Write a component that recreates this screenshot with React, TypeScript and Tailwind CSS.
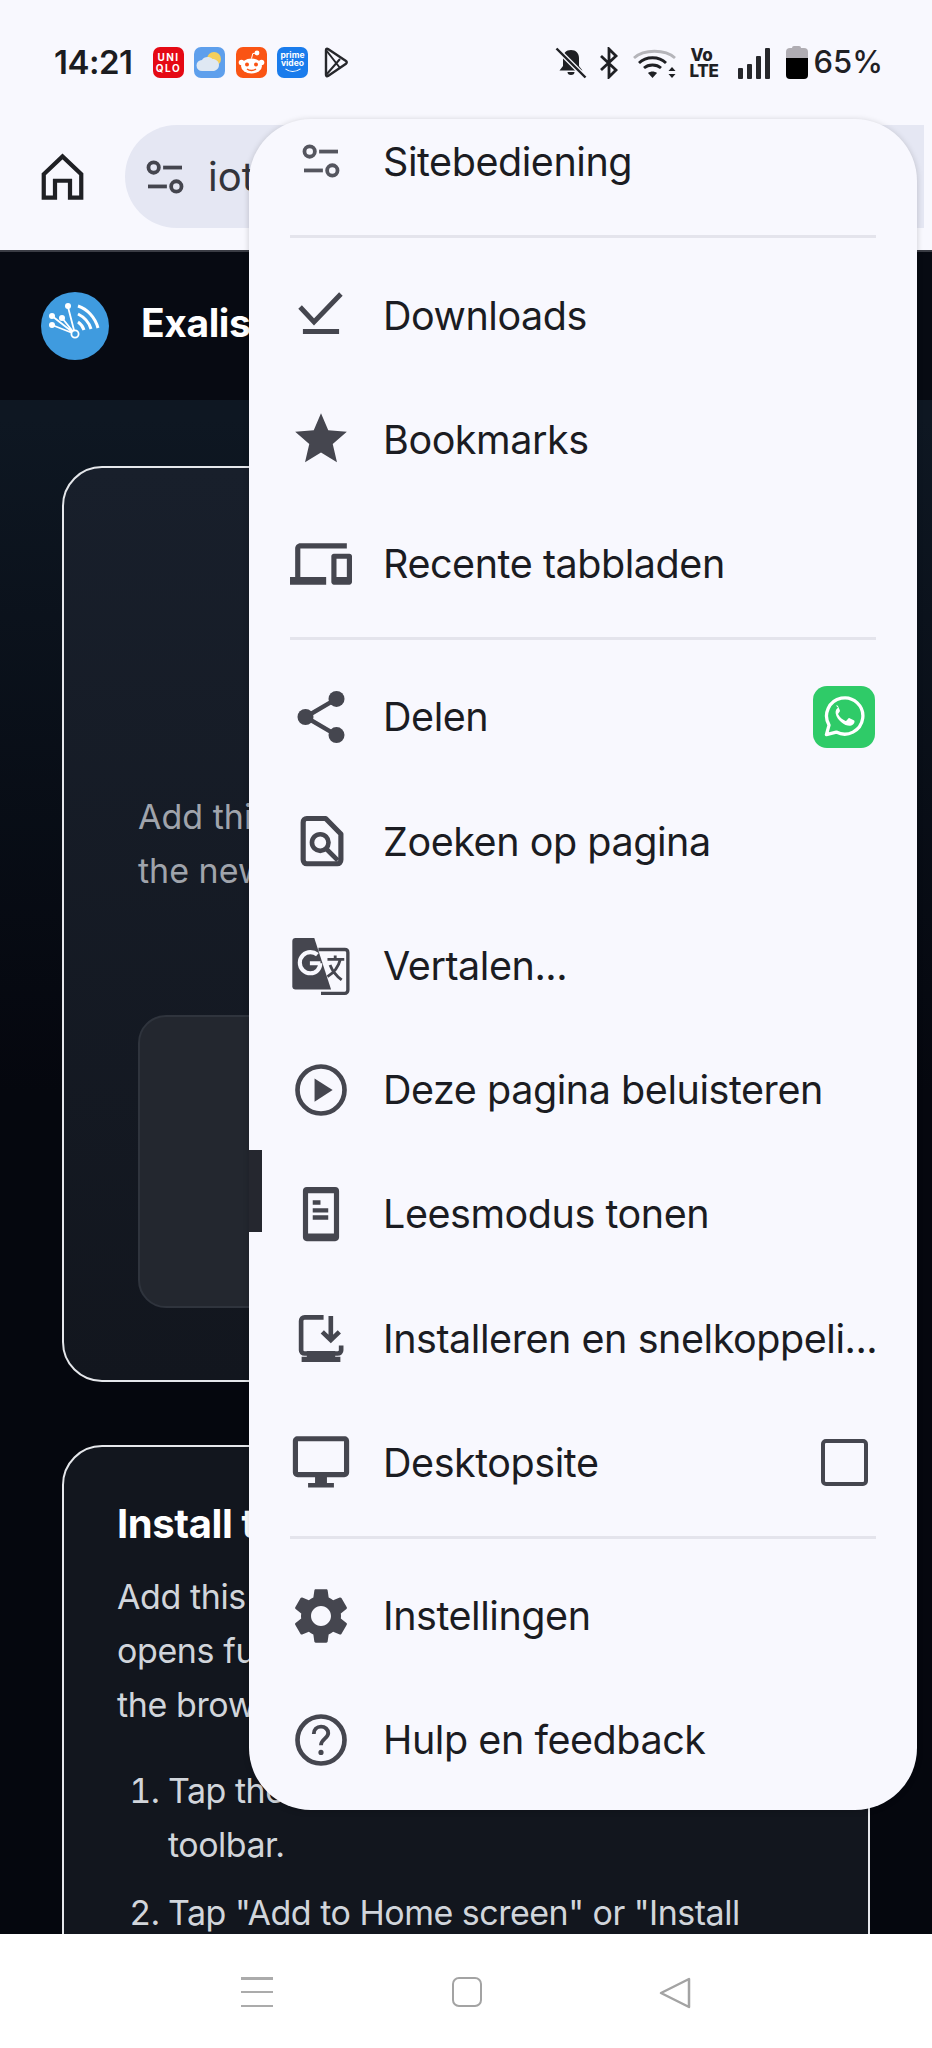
import type { ReactNode } from "react";

const font = "[font-family:Inter,'Noto_Sans',sans-serif]";

function Icon({ children }: { children: ReactNode }) {
  return (
    <svg viewBox="0 0 24 24" className="w-[62px] h-[62px] text-[#45464f]" fill="currentColor">
      {children}
    </svg>
  );
}

function TuneIcon({ className }: { className: string }) {
  return (
    <svg viewBox="0 0 40 36" className={className} fill="none" stroke="currentColor" strokeWidth="4">
      <circle cx="8" cy="8" r="5.5" />
      <path d="M18 8h20" />
      <circle cx="32" cy="28" r="5.5" />
      <path d="M2 28h20" />
    </svg>
  );
}

function MenuRow({ icon, label, right }: { icon: ReactNode; label: string; right?: ReactNode }) {
  return (
    <div className="h-[124.25px] flex items-center pl-[41px] pr-[42px]">
      <div className="w-[62px] h-[62px] mr-[31px] shrink-0">{icon}</div>
      <span className="flex-1 whitespace-nowrap pt-[2px] text-[39.5px] text-[#1b1c22] tracking-[-0.45px]">{label}</span>
      {right}
    </div>
  );
}

function Divider() {
  return <div className="h-[3px] bg-[#e4e4ec] mx-[41px] mt-[11px] mb-[15px]" />;
}

function SiteMenu() {
  return (
    <div className="absolute left-[249px] top-[119px] w-[668px] h-[1691px] bg-[#f8f8fe] rounded-[62px] shadow-[0_1px_6px_rgba(0,0,0,0.18)]">
      <div className="h-[105px] flex items-start pl-[41px] pr-[43px]">
        <div className="w-[62px] h-[62px] mr-[31px] flex items-center justify-center mt-[11px]">
          <TuneIcon className="w-[38px] h-[34px] text-[#55565f]" />
        </div>
        <span className="text-[39.5px] text-[#1b1c22] tracking-[-0.45px] mt-[14px]">Sitebediening</span>
      </div>
      <Divider />
      <MenuRow
        label="Downloads"
        icon={
          <Icon>
            <path d="M3.900 8.900l5.400 5.800L19.700 3.900" fill="none" stroke="currentColor" strokeWidth="1.900" />
            <path d="M5 17.400h14v2H5z" />
          </Icon>
        }
      />
      <MenuRow
        label="Bookmarks"
        icon={
          <Icon>
            <path d="M12 17.270L18.180 21l-1.640-7.030L22 9.240l-7.190-.61L12 2 9.190 8.630 2 9.240l5.460 4.730L5.820 21z" />
          </Icon>
        }
      />
      <MenuRow
        label="Recente tabbladen"
        icon={
          <Icon>
            <path d="M4 6h18V4H4c-1.100 0-2 .9-2 2v11H0v3h14v-3H4V6zm19 2h-6c-.55 0-1 .45-1 1v10c0 .55.45 1 1 1h6c.55 0 1-.45 1-1V9c0-.55-.45-1-1-1zm-1 9h-4v-7h4v7z" />
          </Icon>
        }
      />
      <Divider />
      <MenuRow
        label="Delen"
        icon={
          <Icon>
            <path d="M18 5L6 12l12 7" fill="none" stroke="currentColor" strokeWidth="1.700" />
            <circle cx="18" cy="5" r="3.100" />
            <circle cx="6" cy="12" r="3.100" />
            <circle cx="18" cy="19" r="3.100" />
          </Icon>
        }
        right={
          <div className="w-[62px] h-[62px] rounded-[14px] bg-[#2fcb68] flex items-center justify-center">
            <svg viewBox="0 0 40 40" className="w-[44px] h-[44px]" fill="none">
              <path
                d="M4 36l2.400-8.600A16.500 16.500 0 1 1 13 33.700L4 36z"
                stroke="#fff"
                strokeWidth="3"
                strokeLinejoin="round"
              />
              <path
                d="M14.600 11.500c-1 .4-2.600 2.300-2.200 5 .5 3.400 3 6.300 5.200 8.300 2.600 2.300 6 3.500 8.200 3.200 2-.3 3.800-2 3.800-3.800 0-.6-.2-.9-.7-1.200l-3.800-1.900c-.6-.3-1-.1-1.400.4l-1.300 1.700c-.4.4-.8.5-1.400.2-2.700-1.100-4.800-3.100-6.200-5.600-.3-.5-.2-.9.200-1.300l1-1.200c.4-.5.4-.9.2-1.400l-1.600-3.700c-.3-.6-.6-.7-1.100-.7h-.9z"
                fill="#fff"
              />
            </svg>
          </div>
        }
      />
      <MenuRow
        label="Zoeken op pagina"
        icon={
          <Icon>
            <path
              d="M6.500 3.300h7.300l5.900 6v10c0 .9-.6 1.500-1.400 1.500H6.500c-.8 0-1.400-.6-1.400-1.500V4.800c0-.9.6-1.500 1.400-1.500z"
              fill="none"
              stroke="currentColor"
              strokeWidth="2"
              strokeLinejoin="round"
            />
            <circle cx="11.700" cy="12.600" r="3.200" fill="none" stroke="currentColor" strokeWidth="1.800" />
            <path d="M14 15l4.500 4.500" fill="none" stroke="currentColor" strokeWidth="1.800" />
          </Icon>
        }
      />
      <MenuRow
        label="Vertalen..."
        icon={
          <Icon>
            <path d="M11 6h10.200c.7 0 1.200.5 1.200 1.200v14.500c0 .7-.5 1.300-1.200 1.300H12" fill="none" stroke="currentColor" strokeWidth="1.300" />
            <path d="M2.100 1.500h7.300l6.500 20H2.100c-.7 0-1.200-.5-1.200-1.200V2.700C.9 2 1.400 1.500 2.100 1.500z" />
            <path d="M11.800 11.300H7.700M11.700 11.300c0 2.300-1.600 3.900-3.800 3.900a4.100 4.100 0 0 1 0-8.200c1.100 0 2 .4 2.700 1" fill="none" stroke="#f8f8fe" strokeWidth="1.600" />
            <path d="M14.500 9.800h6.500M17.500 8.300v1.500M19.500 9.800c-.8 3-3 5.500-5 6.700M15.500 12c.8 2 2.500 4.300 4.500 5.800" fill="none" stroke="currentColor" strokeWidth="1.100" />
          </Icon>
        }
      />
      <MenuRow
        label="Deze pagina beluisteren"
        icon={
          <Icon>
            <circle cx="12" cy="12" r="9.100" fill="none" stroke="currentColor" strokeWidth="1.800" />
            <path d="M9.500 7.500v9l7-4.500z" />
          </Icon>
        }
      />
      <MenuRow
        label="Leesmodus tonen"
        icon={
          <Icon>
            <path
              fillRule="evenodd"
              d="M6.500 1.500h11c.9 0 1.500.6 1.500 1.500v18c0 .9-.6 1.500-1.500 1.500h-11C5.600 22.500 5 21.900 5 21V3c0-.9.6-1.500 1.500-1.500zM7 4v15.500h10V4H7z"
            />
            <path d="M8.800 6.700h3v1.700h-3zM8.800 9.800h6v1.600h-6zM8.800 12.500h6v1.700h-6z" />
          </Icon>
        }
      />
      <MenuRow
        label="Installeren en snelkoppeli..."
        icon={
          <Icon>
            <path d="M13 4H5.700C4.800 4 4.300 4.600 4.300 5.400v11.300c0 .7.5 1.300 1.400 1.300h12.700c.9 0 1.400-.6 1.400-1.300v-1.800" fill="none" stroke="currentColor" strokeWidth="1.800" />
            <path d="M6.500 18h11v2.300h2v2H4.500v-2h2z" transform="translate(0 -1)" />
            <path d="M15.800 3.500v9M12.500 9.600l3.300 3.200 3.300-3.200" fill="none" stroke="currentColor" strokeWidth="1.800" />
          </Icon>
        }
      />
      <MenuRow
        label="Desktopsite"
        icon={
          <Icon>
            <path
              fillRule="evenodd"
              d="M3 2h18c1.100 0 1.900.8 1.900 1.900V16c0 1.100-.8 1.900-1.900 1.900h-6.700v2.200h2.700v1.800H7v-1.800h2.700v-2.200H3c-1.100 0-1.900-.8-1.900-1.900V3.900C1.100 2.800 1.900 2 3 2zm.1 2v11.900h17.800V4H3.100z"
            />
          </Icon>
        }
        right={<div className="w-[47px] h-[47px] mr-[7px] border-[4px] border-[#45464f] rounded-[5px]" />}
      />
      <Divider />
      <MenuRow
        label="Instellingen"
        icon={
          <Icon>
            <path d="M19.140 12.940c.04-.3.06-.61.06-.94 0-.32-.02-.64-.07-.94l2.030-1.580c.18-.14.23-.41.12-.61l-1.920-3.320c-.12-.22-.37-.29-.59-.22l-2.390.96c-.5-.38-1.030-.7-1.620-.94l-.36-2.540c-.04-.24-.24-.41-.48-.41h-3.840c-.24 0-.43.17-.47.41l-.36 2.540c-.59.24-1.130.57-1.620.94l-2.390-.96c-.22-.08-.47 0-.59.22L2.740 8.870c-.12.21-.08.47.12.61l2.030 1.580c-.05.3-.09.63-.09.94s.02.64.07.94l-2.030 1.580c-.18.14-.23.41-.12.61l1.920 3.320c.12.22.37.29.59.22l2.390-.96c.5.38 1.030.7 1.620.94l.36 2.540c.05.24.24.41.48.41h3.840c.24 0 .44-.17.47-.41l.36-2.540c.59-.24 1.130-.56 1.620-.94l2.390.96c.22.08.47 0 .59-.22l1.920-3.320c.12-.22.07-.47-.12-.61l-2.010-1.580zM12 15.600c-1.980 0-3.600-1.620-3.600-3.600s1.620-3.600 3.600-3.600 3.600 1.620 3.600 3.600-1.620 3.600-3.600 3.600z" transform="translate(-0.900 -0.900) scale(1.075)" />
          </Icon>
        }
      />
      <MenuRow
        label="Hulp en feedback"
        icon={
          <Icon>
            <circle cx="12" cy="12" r="9.100" fill="none" stroke="currentColor" strokeWidth="1.800" />
            <path d="M9.200 9.700c0-1.700 1.200-2.900 2.800-2.900s2.800 1.100 2.800 2.500c0 2.100-2.800 2.300-2.800 4.700" fill="none" stroke="currentColor" strokeWidth="1.500" />
            <circle cx="12" cy="16.800" r="1" />
          </Icon>
        }
      />
      {/* stray dark block that sits over the menu's left edge */}
      <div className="absolute left-0 top-[1031px] w-[13px] h-[82px] bg-[#25272f]" />
    </div>
  );
}

function StatusBar() {
  return (
    <div className="h-[124px] flex items-center pl-[54px] pr-[49px] pt-[1px]">
      <span className="text-[33px] font-semibold text-[#1b1c20] w-[78px] tracking-[-0.5px] mr-[21px]">14:21</span>
      <div className="w-[31px] h-[31px] rounded-[7px] bg-[#e50914] flex flex-col items-center justify-center text-white text-[10px] leading-[11px] font-bold tracking-[1.500px]">
        <span>UNI</span>
        <span>QLO</span>
      </div>
      <svg viewBox="0 0 31 31" className="w-[31px] h-[31px] ml-[10px]">
        <rect width="31" height="31" rx="7" fill="#5e9fec" />
        <circle cx="20" cy="12" r="7" fill="#f5cf5c" />
        <path d="M8 24a5.500 5.500 0 0 1 0-11c1.500-3 7-4.500 10.500-1 3.500 0 6.500 2.500 6.500 6s-3 6-6 6z" fill="#dfe8f3" />
      </svg>
      <svg viewBox="0 0 31 31" className="w-[31px] h-[31px] ml-[11px]">
        <rect width="31" height="31" rx="7" fill="#fa5414" />
        <ellipse cx="15.500" cy="19" rx="10.500" ry="7.500" fill="#fff" />
        <circle cx="5.500" cy="15.500" r="2.800" fill="#fff" />
        <circle cx="25.500" cy="15.500" r="2.800" fill="#fff" />
        <circle cx="21" cy="6" r="2.400" fill="#fff" />
        <path d="M15.500 11.500l1.300-5L21 6" stroke="#fff" strokeWidth="1" fill="none" />
        <circle cx="11" cy="17.500" r="2" fill="#fa5414" />
        <circle cx="20" cy="17.500" r="2" fill="#fa5414" />
        <path d="M11 22c2.500 2 6.500 2 9 0" stroke="#fa5414" strokeWidth="1.300" fill="none" />
      </svg>
      <div className="relative w-[31px] h-[31px] ml-[10px] rounded-[7px] bg-[#1a7cec] flex flex-col items-center pt-[4px] text-white text-[8.500px] leading-[8px] font-bold">
        <span>prime</span>
        <span>video</span>
        <svg viewBox="0 0 20 6" className="w-[18px] h-[5px] mt-[1px]" fill="none" stroke="#fff" strokeWidth="1.300">
          <path d="M1 1c5 4 12 4 18 0" />
        </svg>
      </div>
      <svg viewBox="0 0 26 31" className="w-[26px] h-[31px] ml-[15px]" fill="none" stroke="#26272b" strokeWidth="2.400" strokeLinejoin="round">
        <path d="M3 3c0-1 1-1.500 2-1l18 12c1 .7 1 2 0 2.700L5 29c-1 .5-2 0-2-1z" />
        <path d="M3 28l14-16M3 3l14 18" strokeWidth="2" />
      </svg>

      <div className="flex-1" />

      <svg viewBox="0 0 32 32" className="w-[32px] h-[32px]" fill="#1f2024">
        <path d="M16 3c-5 0-8 3.500-8 8v8l-3.500 4.500h23L24 19v-8c0-4.500-3-8-8-8zM12.500 25h7a3.500 3 0 0 1-7 0z" />
        <path d="M1.500 1.500l29 29" stroke="#f8f8fe" strokeWidth="5" />
        <path d="M1.500 1.500l29 29" stroke="#1f2024" strokeWidth="2.400" />
      </svg>
      <svg viewBox="0 0 20 32" className="w-[20px] h-[32px] ml-[12px]" fill="none" stroke="#1f2024" strokeWidth="2.800">
        <path d="M2 9l15 14-7 7V2l7 7L2 23" />
      </svg>
      <svg viewBox="0 0 44 32" className="w-[44px] h-[32px] ml-[14px]" fill="none" strokeWidth="2.800">
        <path d="M1 11c10-9 31-9 41 0" stroke="#b5b5ba" />
        <path d="M6 16c7-7 20-7 27 0M11 21c4.500-4 12.500-4 17 0" stroke="#1f2024" />
        <path d="M19.500 31l-4.500-5c2.500-2 6.500-2 9 0z" fill="#1f2024" stroke="none" />
        <path d="M39 20l3.500 4h-7zM39 31l3.500-4h-7z" fill="#1f2024" stroke="none" />
      </svg>
      <div className="w-[30px] ml-[13px] text-[#1f2024] text-[17px] leading-[16px] font-extrabold tracking-[-0.3px]">
        <div className="pl-[1px]">Vo</div>
        <div>LTE</div>
      </div>
      <div className="flex items-end gap-[4px] h-[32px] ml-[18px]">
        <div className="w-[5px] h-[11px] bg-[#26272b] rounded-[1px]" />
        <div className="w-[5px] h-[15px] bg-[#26272b] rounded-[1px]" />
        <div className="w-[5px] h-[23px] bg-[#26272b] rounded-[1px]" />
        <div className="w-[5px] h-[31px] bg-[#26272b] rounded-[1px]" />
      </div>
      <div className="w-[22px] h-[33px] ml-[16px] flex flex-col items-center">
        <div className="w-[9px] h-[2px] bg-[#b0adb3] rounded-t-[2px]" />
        <div className="w-full h-[10px] bg-[#b0adb3] rounded-t-[4px]" />
        <div className="w-full flex-1 bg-black rounded-b-[4px]" />
      </div>
      <span className="text-[31px] font-medium text-[#1f2024] ml-[6px]">65%</span>
    </div>
  );
}

function Toolbar() {
  return (
    <div className="h-[126px] flex items-start pl-[40px] pr-[8px]">
      <svg viewBox="0 0 48 50" className="w-[45px] h-[48px] mt-[29px] text-[#1f2024]" fill="none" stroke="currentColor" strokeWidth="4.500" strokeLinejoin="miter">
        <path d="M4 22L24 3l20 19v25H32V29H16v18H4z" />
      </svg>
      <div className="flex-1 ml-[40px] h-[103px] mt-[1px] bg-[#e5e7f3] rounded-l-[52px] flex items-center pl-[21px]">
        <TuneIcon className="w-[38px] h-[34px] text-[#44454e]" />
        <span className="ml-[24px] text-[40px] text-[#33343b]">iot.exalis.app</span>
      </div>
    </div>
  );
}

function Content() {
  return (
    <div className="flex-1 min-h-0 overflow-hidden bg-gradient-to-b from-[#0e1722] from-[10%] to-[#05070e] to-[50%]">
      <div className="h-[150px] border-t-[2px] border-[#3a3c44] bg-[#070a12] flex items-center pl-[41px]">
        <svg viewBox="0 0 68 68" className="w-[68px] h-[68px]" fill="none" stroke="#fff">
          <circle cx="34" cy="34" r="34" fill="#3f9bdf" stroke="none" />
          <path d="M34 42L27 15M34 42L21 26M34 42L11 24M34 42L11 33" strokeWidth="1.800" />
          <path d="M37 30c3 2 5 5 6 8M37 22c6 3 11 8 13 15M37 14c9 3 17 11 20 22" strokeWidth="3" />
          <circle cx="27" cy="14" r="3" fill="#fff" stroke="none" />
          <circle cx="21" cy="26" r="3" fill="#fff" stroke="none" />
          <circle cx="11" cy="24" r="3" fill="#fff" stroke="none" />
          <circle cx="11" cy="33" r="3" fill="#fff" stroke="none" />
          <circle cx="34" cy="42" r="3.600" fill="#3f9bdf" strokeWidth="1.800" />
        </svg>
        <span className="ml-[32px] mb-[6px] text-[39px] font-bold text-white tracking-[-0.4px]">Exalis IoT</span>
      </div>

      <div className="px-[62px] pt-[66px] flex flex-col gap-[63px]">
        <div className="h-[916px] border-[2px] border-[#e5e7eb] rounded-[40px] bg-gradient-to-b from-[#181f2b] to-[#12161e] px-[74px] pt-[322px]">
          <p className="text-[#a0a4ac] text-[34px] leading-[54px] whitespace-nowrap">
            Add this app
            <br />
            the new
          </p>
          <div className="mt-[117px] h-[293px] bg-[#23272f] border-[2px] border-[#2f343d] rounded-[28px]" />
        </div>

        <div className="border-[2px] border-[#e5e7eb] rounded-[40px] bg-[#12161e] pl-[53px] pr-[60px] pt-[53px] h-[700px]">
          <h2 className="text-white text-[40px] leading-[48px] font-bold tracking-[-0.4px]">Install the app</h2>
          <p className="mt-[22px] text-[#d1d5db] text-[34px] leading-[54px] tracking-[-0.4px] whitespace-nowrap">
            Add this app
            <br />
            opens full
            <br />
            the browser
          </p>
          <ol className="mt-[32px] pl-[51px] list-decimal text-[#d1d5db] text-[34px] leading-[54px] tracking-[-0.5px] space-y-[14px]">
            <li>
              Tap the menu in the
              <br />
              toolbar.
            </li>
            <li>Tap "Add to Home screen" or "Install</li>
          </ol>
        </div>
      </div>
    </div>
  );
}

function NavBar() {
  return (
    <div className="h-[114px] bg-white flex items-start pt-[43px]">
      <div className="w-[273px] h-[30px] flex flex-col items-end justify-between shrink-0">
        <div className="w-[32px] h-[2.500px] bg-[#ababab]" />
        <div className="w-[32px] h-[2.500px] bg-[#ababab]" />
        <div className="w-[32px] h-[2.500px] bg-[#ababab]" />
      </div>
      <div className="w-[30px] h-[30px] ml-[179px] border-[2.500px] border-[#a3a3a3] rounded-[7px]" />
      <svg viewBox="0 0 32 32" className="w-[32px] h-[32px] ml-[177px]" fill="none" stroke="#a3a3a3" strokeWidth="2.500" strokeLinejoin="round">
        <path d="M30 2v28L2 16z" />
      </svg>
    </div>
  );
}

export default function App() {
  return (
    <div className={`relative w-[932px] h-[2048px] overflow-hidden bg-[#f8f8fe] flex flex-col ${font}`}>
      <StatusBar />
      <Toolbar />
      <Content />
      <NavBar />
      <SiteMenu />
    </div>
  );
}
